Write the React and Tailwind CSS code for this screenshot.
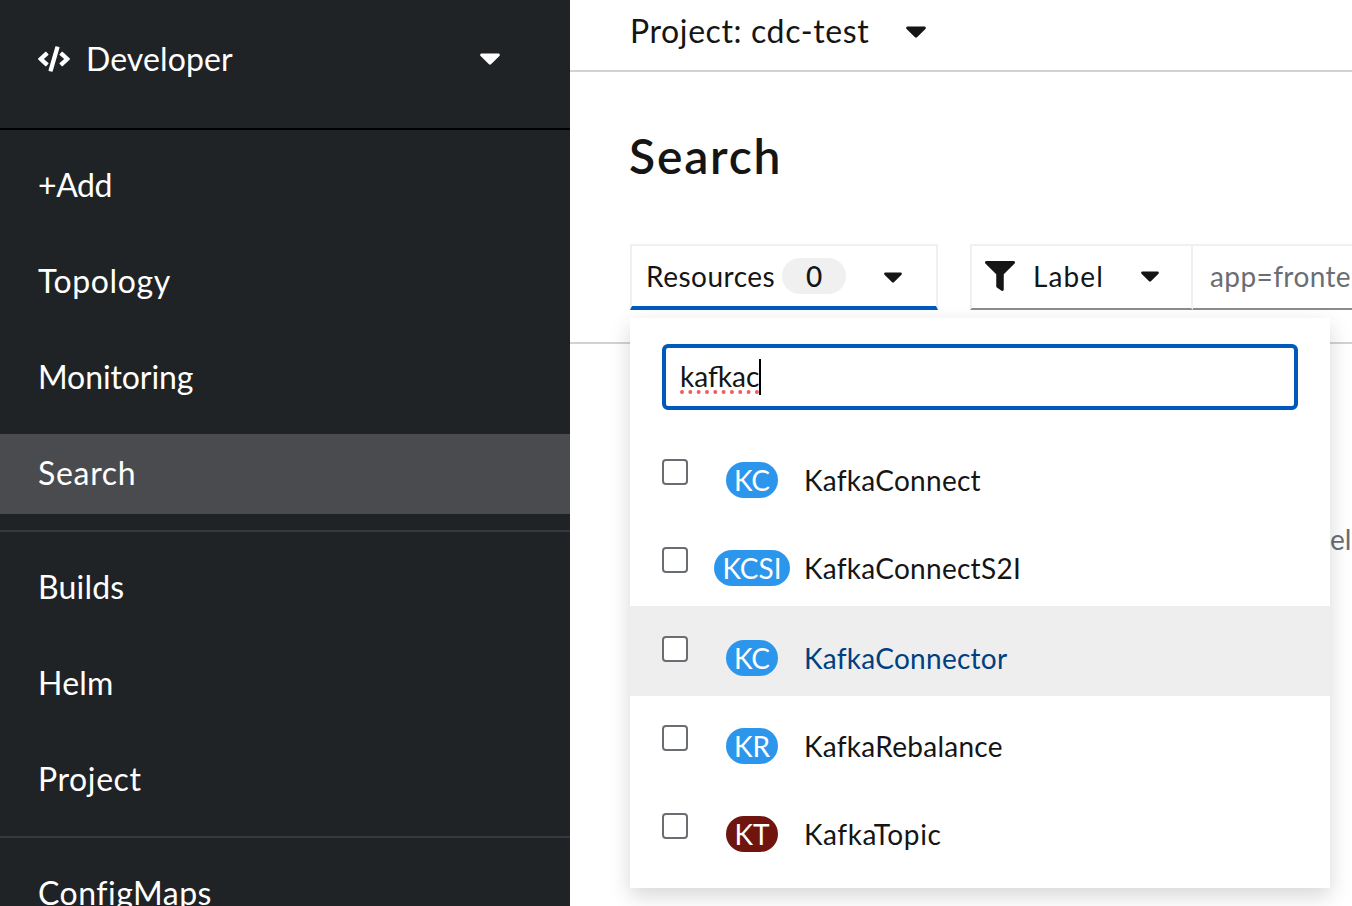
import React from "react";
import { FaCode, FaFilter } from "react-icons/fa";

const font = { fontFamily: '"Lato", "Noto Sans", sans-serif' };

function Caret({ className }) {
  return (
    <svg viewBox="0 0 20 12" className={className} fill="currentColor" aria-hidden="true">
      <path d="M1.6 0.4h16.8c1.3 0 2 1.6 1 2.6l-8.400 8.300c-.6.6-1.400.6-2 0L.6 3C-.4 2 .3.4 1.600.4z" />
    </svg>
  );
}

function NavItem({ children, active, track = "tracking-[0.3px]" }) {
  return (
    <div className={`h-20 flex items-center pl-[38px] pb-[2px] text-[32px] text-white ${track} ${active ? "bg-[#4a4b4f]" : ""}`}>
      {children}
    </div>
  );
}

const rows = [
  { abbr: "KC", name: "KafkaConnect", row: "h-[88px]", cb: "mt-[30px]", bd: "mt-[33px]", w: "w-[52px]", color: "bg-[#2b96ec]", track: "tracking-[0.28px]" },
  { abbr: "KCSI", name: "KafkaConnectS2I", row: "h-[89px]", cb: "mt-[30px]", bd: "mt-[33px]", w: "w-[76px]", color: "bg-[#2b96ec]", track: "tracking-[0.28px]" },
  { abbr: "KC", name: "KafkaConnector", row: "h-[90px] bg-[#eeeeee]", cb: "mt-[30px]", bd: "mt-[34px]", w: "w-[52px]", color: "bg-[#2b96ec]", track: "tracking-[0.28px]", link: true },
  { abbr: "KR", name: "KafkaRebalance", row: "h-[88px]", cb: "mt-[29px]", bd: "mt-[32px]", w: "w-[52px]", color: "bg-[#2b96ec]", track: "tracking-[0.28px]" },
  { abbr: "KT", name: "KafkaTopic", row: "h-[88px]", cb: "mt-[29px]", bd: "mt-[32px]", w: "w-[52px]", color: "bg-[#701410]", track: "tracking-[0.6px]" },
];

export default function App() {
  return (
    <div style={font} className="w-[1352px] h-[906px] overflow-hidden flex bg-white text-[#151515]">
      <aside className="w-[570px] shrink-0 h-full bg-[#1f2326] overflow-hidden">
        <div className="h-[128px] flex items-center pl-[38px] pr-[70px] pb-[10px] text-white">
          <FaCode className="w-8 h-8" />
          <span className="ml-[16px] text-[32px] flex-1 tracking-[0.1px]">Developer</span>
          <Caret className="w-5 h-3" />
        </div>
        <div className="h-[2px] bg-black" />
        <div className="pt-4 flex flex-col gap-4">
          <NavItem track="tracking-[-0.4px]">+Add</NavItem>
          <NavItem track="tracking-[0.6px]">Topology</NavItem>
          <NavItem track="tracking-[-0.1px]">Monitoring</NavItem>
          <NavItem active track="tracking-[0.7px]">Search</NavItem>
        </div>
        <div className="h-[2px] bg-[#35383c] my-4" />
        <div className="flex flex-col gap-4">
          <NavItem track="tracking-[0.2px]">Builds</NavItem>
          <NavItem track="tracking-[0.2px]">Helm</NavItem>
          <NavItem track="tracking-[0.6px]">Project</NavItem>
        </div>
        <div className="h-[2px] bg-[#35383c] my-4" />
        <NavItem track="tracking-[0.5px]">ConfigMaps</NavItem>
      </aside>

      <main className="relative flex-1 min-w-0 overflow-hidden">
        <div className="h-[72px] border-b-2 border-[#d2d2d2] flex items-start pl-[60px] pt-[10px]">
          <span className="text-[32px] leading-[42px] tracking-[0.6px]">Project: cdc-test</span>
          <Caret className="w-5 h-3 ml-[37px] mt-[16px]" />
        </div>
        <h1 className="pl-[59px] mt-[53px] text-[48px] leading-[62px] font-semibold tracking-[1.8px]">Search</h1>
        <div className="pl-[60px] mt-[57px] flex items-start whitespace-nowrap text-[28px]">
          <div className="w-[308px] shrink-0 h-[66px] border-2 border-[#f0f0f0] border-b-4 border-b-[#0059bb] flex items-center pl-[14px]">
            <span className="tracking-[0.5px]">Resources</span>
            <span className="ml-[7px] w-16 h-9 rounded-full bg-[#f0f0f0] flex items-center justify-center text-[28px] font-medium">0</span>
            <Caret className="w-[18px] h-[11px] ml-[38px] mt-[2px]" />
          </div>
          <div className="ml-8 w-[223px] shrink-0 h-[66px] border-2 border-[#f0f0f0] border-b-[#8a8d90] flex items-center pl-[14px] pb-[2px]">
            <FaFilter className="w-[30px] h-[30px] -ml-[1px]" />
            <span className="ml-[18px] tracking-[1.1px]">Label</span>
            <Caret className="w-[18px] h-[11px] ml-[37px]" />
          </div>
          <div className="w-[200px] shrink-0 h-[66px] border-t-2 border-t-[#f0f0f0] border-b-2 border-b-[#8a8d90] flex items-center pl-[17px] pb-[2px] text-[#6a6e73] tracking-[0.4px]">
            app=frontend
          </div>
        </div>
        <div className="h-[2px] bg-[#d2d2d2] mt-[32px]" />
        <p className="mt-[177px] pl-[760px] text-[28px] leading-9 text-[#6a6e73] whitespace-nowrap">el</p>

        <div className="absolute left-[60px] top-[318px] w-[700px] h-[570px] bg-white shadow-[0_8px_20px_rgba(3,3,3,0.16)]">
          <div className="mx-8 mt-[26px] h-[66px] border-4 border-[#0059bb] rounded-[6px] flex items-center pl-[14px] text-[28px]">
            <span className="pb-[2px] underline decoration-dotted decoration-[#f25c5c] decoration-[4px] underline-offset-[3px]">kafkac</span>
            <span className="w-[2px] h-9 bg-black" />
          </div>
          <div className="mt-[19px] text-[28px]">
            {rows.map((r) => (
              <div key={r.name} className={`flex items-start ${r.row}`}>
                <span className={`ml-8 w-[26px] h-[26px] shrink-0 rounded-[4px] border-2 border-[#6a6e73] bg-white ${r.cb}`} />
                <span className={`ml-[26px] w-[76px] shrink-0 flex justify-center ${r.bd}`}>
                  <span className={`${r.w} h-9 rounded-[18px] text-white flex items-center justify-center ${r.color}`}>{r.abbr}</span>
                </span>
                <span className={`ml-[14px] ${r.bd} leading-9 ${r.track} ${r.link ? "text-[#004080]" : ""}`}>{r.name}</span>
              </div>
            ))}
          </div>
        </div>
      </main>
    </div>
  );
}
